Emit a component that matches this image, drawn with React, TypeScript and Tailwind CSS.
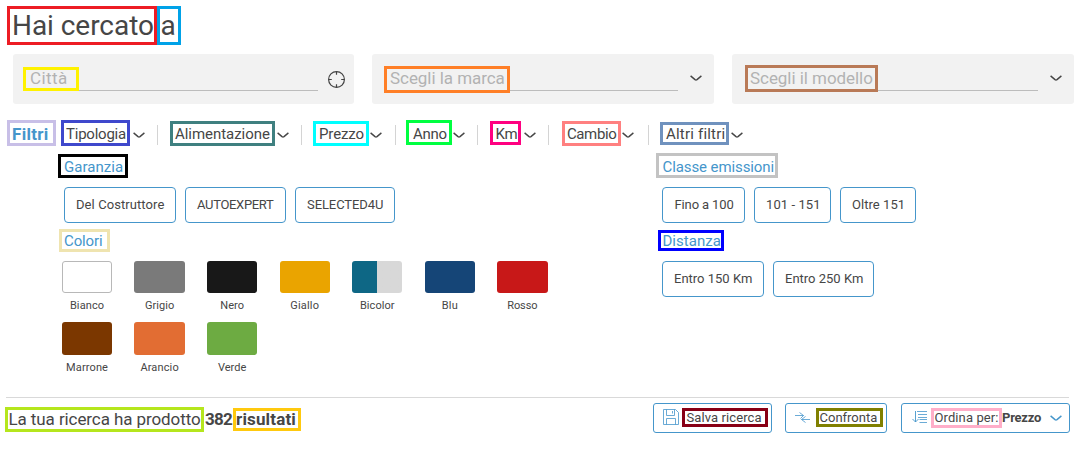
import React from 'react';

type TagProps = { className: string; children: React.ReactNode };

function Tag({ className, children }: TagProps) {
  return (
    <span className={`block shrink-0 whitespace-nowrap border-[3px] text-left ${className}`}>{children}</span>
  );
}

function Chevron({ className }: { className: string }) {
  return (
    <svg viewBox="0 0 12 7" className={`h-[7px] w-3 shrink-0 fill-none stroke-current ${className}`}>
      <path d="M0.6 0.9 L5 4.6 Q6 5.3 7 4.6 L11.4 0.9" strokeWidth="1.4" />
    </svg>
  );
}

function Divider({ className }: { className: string }) {
  return <span className={`mt-[5px] h-5 w-px shrink-0 bg-[#d4d4d4] ${className}`} />;
}

function Option({ className, children }: TagProps) {
  return (
    <button
      className={`flex h-9 shrink-0 items-center whitespace-nowrap rounded-[4px] border border-[#4596cb] text-[13px] leading-4 ${className}`}
    >
      {children}
    </button>
  );
}

const colors = [
  { name: 'Bianco', fill: 'h-8 border border-[#b8b8b8] bg-white', text: 'tracking-[0.13px]' },
  { name: 'Grigio', fill: 'h-8 bg-[#7a7a7a]', text: 'tracking-[0.05px]' },
  { name: 'Nero', fill: 'h-8 bg-[#181818]', text: 'tracking-[0.1px]' },
  { name: 'Giallo', fill: 'h-8 bg-[#eaa400]', text: 'tracking-[0.2px]' },
  { name: 'Bicolor', fill: 'h-8 bg-linear-to-r from-[#0e6785] from-50% to-[#d8d8d8] to-50%', text: 'tracking-[0.08px]' },
  { name: 'Blu', fill: 'h-8 bg-[#154577]', text: 'tracking-[0.24px]' },
  { name: 'Rosso', fill: 'h-8 bg-[#c81818]', text: 'tracking-[-0.1px]' },
  { name: 'Marrone', fill: 'h-[33px] bg-[#7b3700]', text: 'tracking-[0.12px]' },
  { name: 'Arancio', fill: 'h-[33px] bg-[#e26d33]', text: 'tracking-[0.14px]' },
  { name: 'Verde', fill: 'h-[33px] bg-[#6dab42]', text: 'tracking-[0.02px]' },
];

function SearchFields() {
  return (
    <div className="mt-[9px] flex h-[50px] pl-[6px]">
      <div className="flex w-[341px] rounded-[3px] bg-[#f2f2f2] pl-[10px]">
        <div className="h-[37px] w-[295px] border-b border-[#bcbcbc] text-[17px] leading-4 text-[#b2b2b2]">
          <Tag className="mt-[13px] h-6 w-14 border-[#fff200] pl-[4px] tracking-[0.45px]">Città</Tag>
        </div>
        <svg viewBox="0 0 18 18" className="ml-[9px] mt-4 h-[18px] w-[18px] fill-none stroke-[#444]">
          <circle cx="9.5" cy="9.5" r="7.9" strokeWidth="1.2" />
          <path d="M9.5 1.5v3.3M9.5 14.2v3.3M1.5 9.5h3.3M14.2 9.5H17.5" strokeWidth="1.2" />
        </svg>
      </div>
      <div className="ml-[18px] flex w-[342px] rounded-[3px] bg-[#f2f2f2] pl-3">
        <div className="h-[37px] w-[294px] border-b border-[#bcbcbc] text-[17px] leading-4 text-[#b2b2b2]">
          <Tag className="mt-3 h-[27px] w-[126px] border-[#ff7f27] pl-[3px] pt-px tracking-[-0.05px]">Scegli la marca</Tag>
        </div>
        <Chevron className="ml-3 mt-[21px] text-[#444]" />
      </div>
      <div className="ml-[18px] flex w-[342px] rounded-[3px] bg-[#f2f2f2] pl-[13px]">
        <div className="h-[37px] w-[293px] border-b border-[#bcbcbc] text-[17px] leading-4 text-[#b2b2b2]">
          <Tag className="mt-[11px] h-[27px] w-[133px] border-[#b97a57] pl-[2px] pt-[2px] tracking-[-0.05px]">Scegli il modello</Tag>
        </div>
        <Chevron className="ml-3 mt-[21px] text-[#444]" />
      </div>
    </div>
  );
}

function FilterBar() {
  return (
    <nav className="mt-4 flex h-[26px] items-start text-[15px] leading-4">
      <Tag className="h-[26px] w-[49px] border-[#c8bfe7] pl-[2px] pt-[3px] text-[17px] leading-4 font-bold tracking-[0.3px] text-[#4596cb]">Filtri</Tag>
      <Tag className="ml-[5px] h-[26px] w-[69px] border-[#3f48cc] pl-[2px] pt-[3px] tracking-[-0.23px]">Tipologia</Tag>
      <Chevron className="ml-[3px] mt-3" />
      <Divider className="ml-3" />
      <Tag className="ml-3 mt-px h-[25px] w-[105px] border-[#3f8080] pl-[2px] pt-[2px] tracking-[-0.04px]">Alimentazione</Tag>
      <Chevron className="ml-[2px] mt-3" />
      <Divider className="ml-3" />
      <Tag className="ml-[11px] mt-px h-[25px] w-14 border-[#00ffff] pl-[3px] pt-[2px] tracking-[-0.13px]">Prezzo</Tag>
      <Chevron className="ml-px mt-3" />
      <Divider className="ml-[13px]" />
      <Tag className="ml-[10px] h-[25px] w-[46px] border-[#00ff40] pl-[4px] pt-[3px] tracking-[-0.25px]">Anno</Tag>
      <Chevron className="ml-px mt-3" />
      <Divider className="ml-3" />
      <Tag className="ml-3 mt-px h-6 w-[31px] border-[#ff0080] pl-[2.5px] pt-[2px] tracking-[-0.24px]">Km</Tag>
      <Chevron className="ml-[3px] mt-3" />
      <Divider className="ml-3" />
      <Tag className="ml-[13px] mt-px h-[25px] w-[59px] border-[#ff8080] pl-[2px] pt-[2px] tracking-[-0.4px]">Cambio</Tag>
      <Chevron className="ml-px mt-3" />
      <Divider className="ml-[14px]" />
      <Tag className="ml-[11px] mt-[2px] h-[23px] w-[69px] border-[#7092be] pl-[3px] pt-px tracking-[0.2px]">Altri filtri</Tag>
      <Chevron className="ml-[2px] mt-3" />
    </nav>
  );
}

function FilterPanels() {
  return (
    <div className="mt-[7px] flex h-[244px] text-[15px] leading-4">
      <section className="ml-[51px] w-[598px]">
        <Tag className="mt-px h-6 w-[70px] border-black pl-[3px] pt-[2px] tracking-[0.04px] text-[#4596cb]">Garanzia</Tag>
        <div className="ml-[6px] mt-[9px] flex">
          <Option className="w-28 pl-[11px] tracking-[0.08px]">Del Costruttore</Option>
          <Option className="ml-[9px] w-[101px] pl-[11px] tracking-[-0.33px]">AUTOEXPERT</Option>
          <Option className="ml-[9px] w-[100px] pl-[11px] tracking-[-0.08px]">SELECTED4U</Option>
        </div>
        <Tag className="ml-px mt-[6px] h-[23px] w-[51px] border-[#efe4b0] pl-[2px] pt-px tracking-[-0.12px] text-[#4596cb]">Colori</Tag>
        <div className="ml-[3.9px] mt-[9px] grid w-max grid-cols-[repeat(7,72.55px)] gap-y-2">
          {colors.map((color) => (
            <div key={color.name} className="flex w-[50.4px] flex-col items-center text-[11px] leading-4">
              <span className={`w-full rounded-[3px] ${color.fill}`} />
              <span className={`mt-[5px] ${color.text}`}>{color.name}</span>
            </div>
          ))}
        </div>
      </section>
      <section>
        <Tag className="h-[25px] w-[122px] border-[#c3c3c3] pl-[3.5px] pt-[3px] tracking-[-0.1px] text-[#4596cb]">Classe emissioni</Tag>
        <div className="ml-[6px] mt-[9px] flex">
          <Option className="w-[83px] pl-[11.5px] tracking-[-0.12px]">Fino a 100</Option>
          <Option className="ml-[9px] w-[77px] pl-[11px] tracking-[0.08px]">101 - 151</Option>
          <Option className="ml-[9px] w-[76px] pl-[11px] tracking-[0.05px]">Oltre 151</Option>
        </div>
        <Tag className="ml-[2px] mt-[7px] h-[21px] w-[66px] border-[#0000ff] pl-[1.5px] tracking-[0.03px] text-[#4596cb]">Distanza</Tag>
        <div className="ml-[6px] mt-[10px] flex">
          <Option className="w-[102px] pl-[11px]">Entro 150 Km</Option>
          <Option className="ml-[9px] w-[101px] pl-[11px]">Entro 250 Km</Option>
        </div>
      </section>
    </div>
  );
}

function ResultsBar() {
  return (
    <footer className="mt-[5px] flex items-start text-[17px] leading-4">
      <Tag className="-ml-[2px] mt-1 h-[25px] w-[199px] border-[#b5e61d] pl-[0.5px] pt-px tracking-[-0.09px]">La tua ricerca ha prodotto</Tag>
      <span className="ml-px mt-2 w-7 font-bold tracking-[-0.8px]">382</span>
      <Tag className="mt-[5px] h-[23px] w-[68px] border-[#ffc90e] font-bold tracking-[0.15px]">risultati</Tag>
      <button className="ml-[352px] flex h-[30px] w-[119px] items-start rounded-[3px] border border-[#4596cb] text-[13px] leading-[14px]">
        <svg viewBox="0 0 16 16" className="ml-[9px] mt-[5px] h-4 w-4 fill-none stroke-[#4596cb]">
          <path d="M.5 .5H12.5L15.5 3.5V15.5H.5zM3.5 .5V6.5H11.5V.5M9.5 2V4.5M3.5 15.5V9.5H12.5V15.5" strokeWidth="0.8" />
        </svg>
        <Tag className="ml-[3px] mt-1 h-[19px] w-[86px] border-[#880015] pl-[1.5px] tracking-[0.1px]">Salva ricerca</Tag>
      </button>
      <button className="ml-[13px] flex h-[30px] w-[102px] items-start rounded-[3px] border border-[#4596cb] text-[13px] leading-[14px]">
        <svg viewBox="0 0 16 12" className="ml-[9px] mt-2 h-3 w-4 fill-none stroke-[#4596cb]">
          <path d="M0 3.5H8.5M4.5 .5L8.5 3.5L5.5 6.5M15 7.5H6.5M10.5 4.5L6.5 7.5L10.5 10.5" strokeWidth="0.8" />
        </svg>
        <Tag className="ml-[5px] mt-1 h-[19px] w-[67px] border-[#808000] pl-[0.5px]">Confronta</Tag>
      </button>
      <button className="ml-[14px] flex h-[30px] w-[169px] items-start rounded-[3px] border border-[#4596cb] text-[13px] leading-[14px]">
        <svg viewBox="0 0 16 14" className="ml-[10px] mt-[6px] h-[14px] w-4 fill-none stroke-[#4596cb]">
          <path d="M3.5 1V12M.5 9L3.5 12L6.5 9" strokeWidth="0.9" />
          <path d="M5 1.5H15M6 4.5H15M6 7.5H15M7.5 9.5H15M7.5 12.5H15" strokeWidth="0.8" />
        </svg>
        <Tag className="ml-[3px] mt-1 h-5 w-[71px] border-[#ffaec9] pl-[0.5px] tracking-[0.1px]">Ordina per:</Tag>
        <span className="mt-[7px] w-12 text-left font-bold tracking-[-0.23px]">Prezzo</span>
        <Chevron className="mt-[11px] text-[#4596cb]" />
      </button>
    </footer>
  );
}

export default function App() {
  return (
    <main className="h-[462px] w-[1092px] overflow-hidden bg-white pl-[7px] pt-[6px] font-[Roboto,sans-serif] text-[#464646]">
      <h1 className="flex h-[39px] text-[28px] leading-7">
        <Tag className="h-[39px] w-[150px] border-[#ed1c24] pl-[2px] pt-[3px] tracking-[-0.05px]">Hai cercato</Tag>
        <Tag className="h-[39px] w-6 border-[#00a2e8] pl-[0.5px] pt-[3px]">a</Tag>
      </h1>
      <SearchFields />
      <FilterBar />
      <FilterPanels />
      <hr className="-ml-px w-[1063px] border-t border-[#d9d9d9]" />
      <ResultsBar />
    </main>
  );
}
